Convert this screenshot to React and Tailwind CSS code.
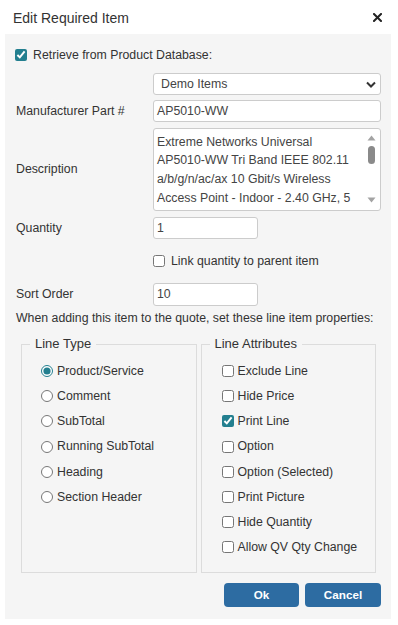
export default function App() {
  const lineTypes = [
    ["Product/Service", true],
    ["Comment", false],
    ["SubTotal", false],
    ["Running SubTotal", false],
    ["Heading", false],
    ["Section Header", false],
  ];
  const attrs = [
    ["Exclude Line", false],
    ["Hide Price", false],
    ["Print Line", true],
    ["Option", false],
    ["Option (Selected)", false],
    ["Print Picture", false],
    ["Hide Quantity", false],
    ["Allow QV Qty Change", false],
  ];
  const descLines = [
    "Extreme Networks Universal",
    "AP5010-WW Tri Band IEEE 802.11",
    "a/b/g/n/ac/ax 10 Gbit/s Wireless",
    "Access Point - Indoor - 2.40 GHz, 5",
  ];
  return (
    <div className="w-[398px] h-[625px] bg-white text-[#333] font-['Liberation_Sans',Arial,sans-serif]">
      <div className="h-[34px] flex items-center justify-between pl-[13px] pr-[16px] pt-[3px]">
        <span className="text-[14px]">Edit Required Item</span>
        <svg width="9" height="9" viewBox="0 0 9 9" className="-mt-[2px]">
          <path d="M1 1 L8 8 M8 1 L1 8" stroke="#222" strokeWidth="2" strokeLinecap="square" />
        </svg>
      </div>
      <div className="ml-[5px] w-[386px] h-[585px] bg-[#f5f5f5] pl-[11px] pr-[10px] pt-[10px] text-[12.3px]">
        <div className="h-[22px] flex items-center -ml-[1px] gap-[6px]">
          <input type="checkbox" defaultChecked className="w-[12px] h-[12px] accent-[#237f8f]" />
          <span>Retrieve from Product Database:</span>
        </div>

        <div className="mt-[7px] ml-[137px] h-[22px] border border-[#ccc] rounded-[3px] bg-white flex items-center justify-between pl-[7px] pr-[4px] text-[#444]">
          <span>Demo Items</span>
          <svg width="10" height="7" viewBox="0 0 10 7">
            <path d="M1 1.5 L5 5.5 L9 1.5" fill="none" stroke="#333" strokeWidth="2" />
          </svg>
        </div>

        <div className="mt-[5px] h-[22px] flex items-center">
          <div className="w-[137px]">Manufacturer Part #</div>
          <div className="flex-1 h-full border border-[#ccc] rounded-[3px] bg-white flex items-center pl-[3px] text-[#444]">
            AP5010-WW
          </div>
        </div>

        <div className="mt-[6px] h-[83px] flex items-center">
          <div className="w-[137px]">Description</div>
          <div className="flex-1 h-full border border-[#ccc] rounded-[3px] bg-white flex overflow-hidden text-[#444]">
            <div className="flex-1 pl-[3px] pt-[3.5px] leading-[18.8px] overflow-hidden whitespace-nowrap">
              {descLines.map((l) => (
                <div key={l}>{l}</div>
              ))}
            </div>
            <div className="w-[17px] flex flex-col items-center pt-[6px]">
              <svg width="9" height="6" viewBox="0 0 9 6">
                <path d="M0.5 5.5 L4.5 0.5 L8.5 5.5 Z" fill="#a3a3a3" />
              </svg>
              <div className="mt-[5px] w-[7px] h-[18px] rounded-full bg-[#8a8a8a]" />
              <div className="flex-1" />
              <svg width="9" height="6" viewBox="0 0 9 6" className="mb-[7px]">
                <path d="M0.5 0.5 L4.5 5.5 L8.5 0.5 Z" fill="#a3a3a3" />
              </svg>
            </div>
          </div>
        </div>

        <div className="mt-[6px] h-[22px] flex items-center">
          <div className="w-[137px]">Quantity</div>
          <div className="w-[105px] h-full border border-[#ccc] rounded-[3px] bg-white flex items-center pl-[3px] text-[#444]">
            1
          </div>
        </div>

        <div className="mt-[11px] ml-[137px] h-[22px] flex items-center gap-[6px]">
          <input type="checkbox" className="w-[12px] h-[12px] accent-[#237f8f]" />
          <span>Link quantity to parent item</span>
        </div>

        <div className="mt-[11px] h-[23px] flex items-center">
          <div className="w-[137px]">Sort Order</div>
          <div className="w-[105px] h-full border border-[#ccc] rounded-[3px] bg-white flex items-center pl-[3px] text-[#444]">
            10
          </div>
        </div>

        <div className="mt-[3px] h-[18px] flex items-center">
          When adding this item to the quote, set these line item properties:
        </div>

        <div className="mt-[8px] mx-[5px] grid grid-cols-2 gap-[4px]">
          <fieldset className="border border-[#dcdcdc] px-[8px] pb-[12px] min-w-0">
            <legend className="px-[5px] text-[13px] leading-[18px]">Line Type</legend>
            <div className="pt-[5.4px] pl-[11px]">
              {lineTypes.map(([t, c]) => (
                <label key={t} className="h-[25.2px] flex items-center gap-[4px]">
                  <input type="radio" name="lt" defaultChecked={c} className="w-[12px] h-[12px] accent-[#237f8f]" />
                  <span>{t}</span>
                </label>
              ))}
            </div>
          </fieldset>
          <fieldset className="border border-[#dcdcdc] px-[8px] pb-[12px] min-w-0">
            <legend className="px-[5px] text-[13px] leading-[18px]">Line Attributes</legend>
            <div className="pt-[5.4px] pl-[12px]">
              {attrs.map(([t, c]) => (
                <label key={t} className="h-[25.2px] flex items-center gap-[4px]">
                  <input type="checkbox" defaultChecked={c} className="w-[12px] h-[12px] accent-[#237f8f]" />
                  <span>{t}</span>
                </label>
              ))}
            </div>
          </fieldset>
        </div>

        <div className="mt-[10px] flex justify-end gap-[6px]">
          <button className="w-[75px] h-[24px] rounded-[4px] bg-[#2d6ca2] text-white font-bold text-[11.7px]">
            Ok
          </button>
          <button className="w-[76px] h-[24px] rounded-[4px] bg-[#2d6ca2] text-white font-bold text-[11.7px]">
            Cancel
          </button>
        </div>
      </div>
    </div>
  );
}
